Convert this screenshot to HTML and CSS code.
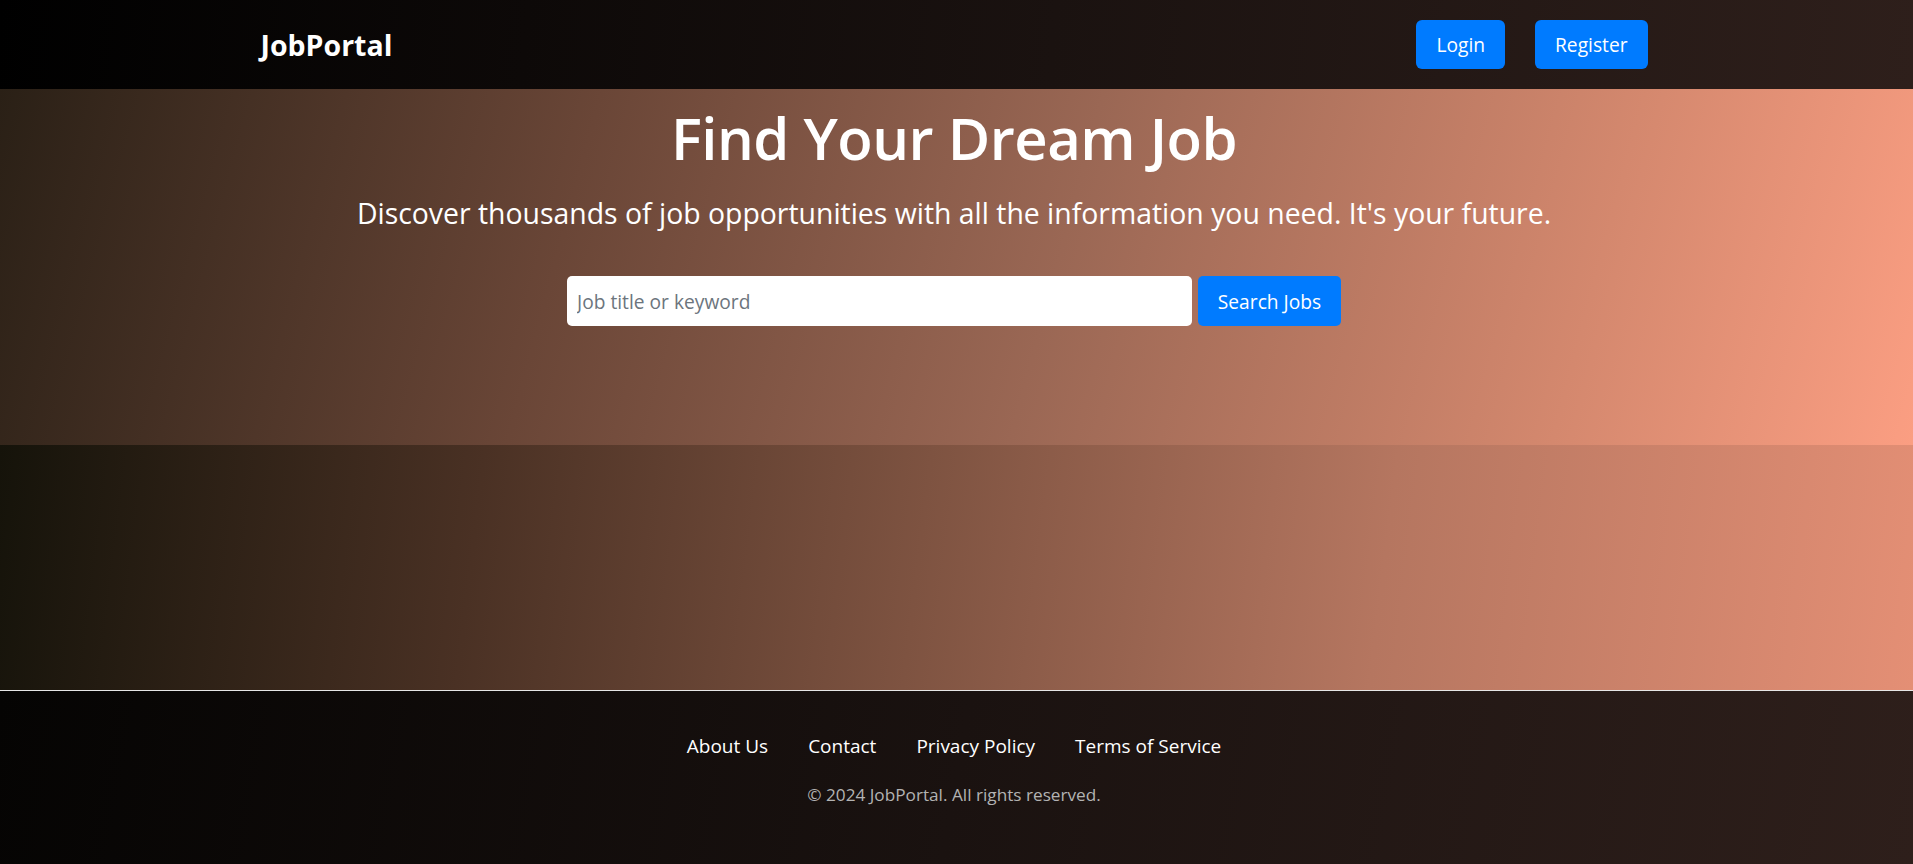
FILE: index.html
```html
<!DOCTYPE html>
<html lang="en">
<head>
<meta charset="utf-8">
<title>JobPortal</title>
<link rel="stylesheet" href="styles.css">
</head>
<body>
<header class="site-header">
  <div class="container nav">
    <a class="brand" href="#">JobPortal</a>
    <div class="nav-actions">
      <a class="btn" href="#">Login</a>
      <a class="btn" href="#">Register</a>
    </div>
  </div>
</header>
<section class="hero">
  <h1 class="hero-title">Find Your Dream Job</h1>
  <p class="hero-lead">Discover thousands of job opportunities with all the information you need. It's your future.</p>
  <form class="search">
    <input class="search-input" type="text" placeholder="Job title or keyword">
    <button class="btn search-btn" type="button">Search Jobs</button>
  </form>
</section>
<main class="content"></main>
<footer class="site-footer">
  <nav class="footer-links">
    <a href="#">About Us</a>
    <a href="#">Contact</a>
    <a href="#">Privacy Policy</a>
    <a href="#">Terms of Service</a>
  </nav>
  <p class="copyright">© 2024 JobPortal. All rights reserved.</p>
</footer>
</body>
</html>
```
FILE: styles.css
```css
* { box-sizing: border-box; }
html, body { margin: 0; padding: 0; }
body {
  font-family: "Open Sans", "Noto Sans", sans-serif;
  color: #fff;
  background: #16140a;
  height: 864px;
  overflow: hidden;
}
a { text-decoration: none; color: inherit; }

.site-header {
  height: 89px;
  padding-right: 5px;
  background: linear-gradient(95deg, #000000 0%, #1a1210 55%, #2e1f1b 100%);
}
.container {
  width: 1387px;
  margin: 0 auto;
}
.nav {
  height: 100%;
  display: flex;
  align-items: center;
  justify-content: space-between;
}
.brand {
  font-weight: 700;
  font-size: 28.5px;
  color: #fff;
}
.nav-actions {
  display: flex;
  gap: 30px;
}
.btn {
  display: inline-flex;
  align-items: center;
  justify-content: center;
  height: 49px;
  padding: 0 20px;
  background: #007bff;
  color: #fff;
  border: 0;
  border-radius: 6px;
  font-family: inherit;
  font-size: 19.2px;
}

.hero {
  height: 356px;
  padding: 14px 5px 0 0;
  text-align: center;
  background: linear-gradient(105deg, #2a2016 0%, #6a4637 30%, #9a6754 55%, #d4886e 82%, #fb9e82 100%);
}
.hero-title {
  margin: 0;
  font-size: 58px;
  font-weight: 600;
  line-height: 1.2;
  letter-spacing: -0.5px;
}
.hero-lead {
  margin: 21px 0 0;
  font-size: 28.4px;
  line-height: 1.4;
}
.search {
  display: flex;
  justify-content: center;
  gap: 6px;
  margin-top: 43px;
}
.search-input {
  width: 625px;
  height: 50px;
  padding: 0 10px;
  border: 0;
  border-radius: 5px;
  font-family: inherit;
  font-size: 19.2px;
  color: #333;
  background: #fff;
  outline: none;
}
.search-input::placeholder { color: #6c757d; }
.search-btn {
  height: 50px;
  width: 143px;
  padding: 0;
  border-radius: 5px;
}

.content {
  height: 245px;
  background: linear-gradient(97deg, #15130a 0%, #4a3124 25%, #7e5341 48%, #b57660 72%, #e48f75 100%);
}

.site-footer {
  height: 174px;
  border-top: 1px solid #e6e6e6;
  background: linear-gradient(100deg, #050403 0%, #1a1210 50%, #2e1f1b 100%);
  text-align: center;
  padding: 42px 5px 0 0;
}
.footer-links {
  display: flex;
  justify-content: center;
  gap: 40px;
  font-size: 19px;
  line-height: 1.4;
}
.copyright {
  margin: 23px 0 0;
  font-size: 17.2px;
  line-height: 1.4;
  color: #b3b3b3;
}
```
